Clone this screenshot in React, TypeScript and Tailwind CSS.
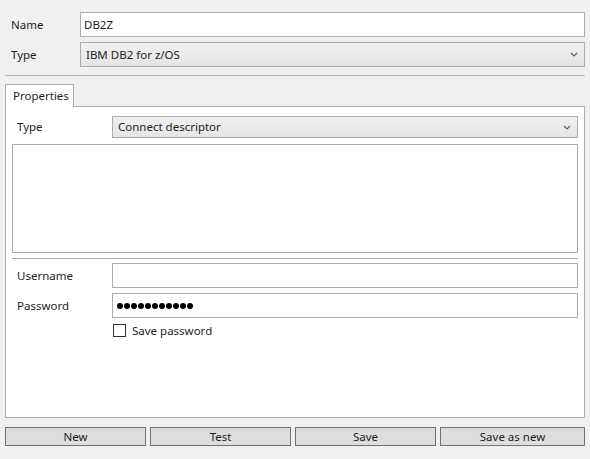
const Chevron = () => (
  <svg width="8" height="5" viewBox="0 0 8 5" className="shrink-0">
    <path d="M1 1 L4 4 L7 1" fill="none" stroke="#606060" strokeWidth="1.2" />
  </svg>
);

const Select = ({ value, className }: { value: string; className: string }) => (
  <div
    className={`flex items-center justify-between border border-[#acacac] bg-gradient-to-b from-[#f0f0f0] to-[#e5e5e5] pl-[5px] pr-[6px] ${className}`}
  >
    <span>{value}</span>
    <Chevron />
  </div>
);

const App = () => {
  const buttons = ['New', 'Test', 'Save', 'Save as new'];

  return (
    <div
      className="w-[590px] h-[459px] bg-[#f0f0f0] text-[11.5px] text-[#1e1e1e] overflow-hidden"
      style={{ fontFamily: '"Noto Sans", "Open Sans", sans-serif' }}
    >
      {/* Connection header */}
      <div className="pt-[12px] pr-[5px]">
        <div className="flex items-center">
          <span className="w-[80px] pl-[11px]">Name</span>
          <div className="flex-1 h-[25px] border border-[#acacac] bg-white flex items-center pl-[3px]">DB2Z</div>
        </div>
        <div className="flex items-center mt-[5px]">
          <span className="w-[80px] pl-[11px]">Type</span>
          <Select value="IBM DB2 for z/OS" className="flex-1 h-[25px]" />
        </div>
      </div>

      <div className="mt-[8px] mx-[5px] h-px bg-[#b4b4b4]" />

      {/* Tabs */}
      <div className="mt-[8px] px-[5px]">
        <div className="relative z-10 -mb-px w-[69px] h-[23px] border border-b-0 border-[#acacac] bg-white flex items-center pl-[7px]">
          Properties
        </div>
        <div className="h-[312px] border border-[#acacac] bg-white px-[6px] pt-[9px]">
          <div className="flex items-center">
            <span className="w-[100px] pl-[5px]">Type</span>
            <Select value="Connect descriptor" className="flex-1 h-[22px]" />
          </div>
          <div className="mt-[6px] h-[109px] border border-[#acacac] bg-white" />
          <div className="mt-[5px] h-px bg-[#acacac]" />
          <div className="flex items-center mt-[4px]">
            <span className="w-[100px] pl-[5px]">Username</span>
            <div className="flex-1 h-[25px] border border-[#acacac] bg-white" />
          </div>
          <div className="flex items-center mt-[5px]">
            <span className="w-[100px] pl-[5px]">Password</span>
            <div className="flex-1 h-[25px] border border-[#acacac] bg-white flex items-center gap-[1px] pl-[4px]">
              {Array.from({ length: 11 }).map((_, i) => (
                <span key={i} className="w-[6px] h-[6px] rounded-full bg-black" />
              ))}
            </div>
          </div>
          <div className="flex items-center mt-[4px] pl-[101px]">
            <span className="w-[13px] h-[13px] border border-[#333333] bg-white" />
            <span className="ml-[6px]">Save password</span>
          </div>
        </div>
      </div>

      {/* Actions */}
      <div className="flex gap-[4px] px-[5px] mt-[9px]">
        {buttons.map((label, i) => (
          <button
            key={label}
            className={`h-[19px] border border-[#707070] bg-[#dddddd] flex items-center justify-center leading-none pt-[1px] ${i < 3 ? 'w-[141px]' : 'flex-1'}`}
          >
            {label}
          </button>
        ))}
      </div>
    </div>
  );
};

export default App;
